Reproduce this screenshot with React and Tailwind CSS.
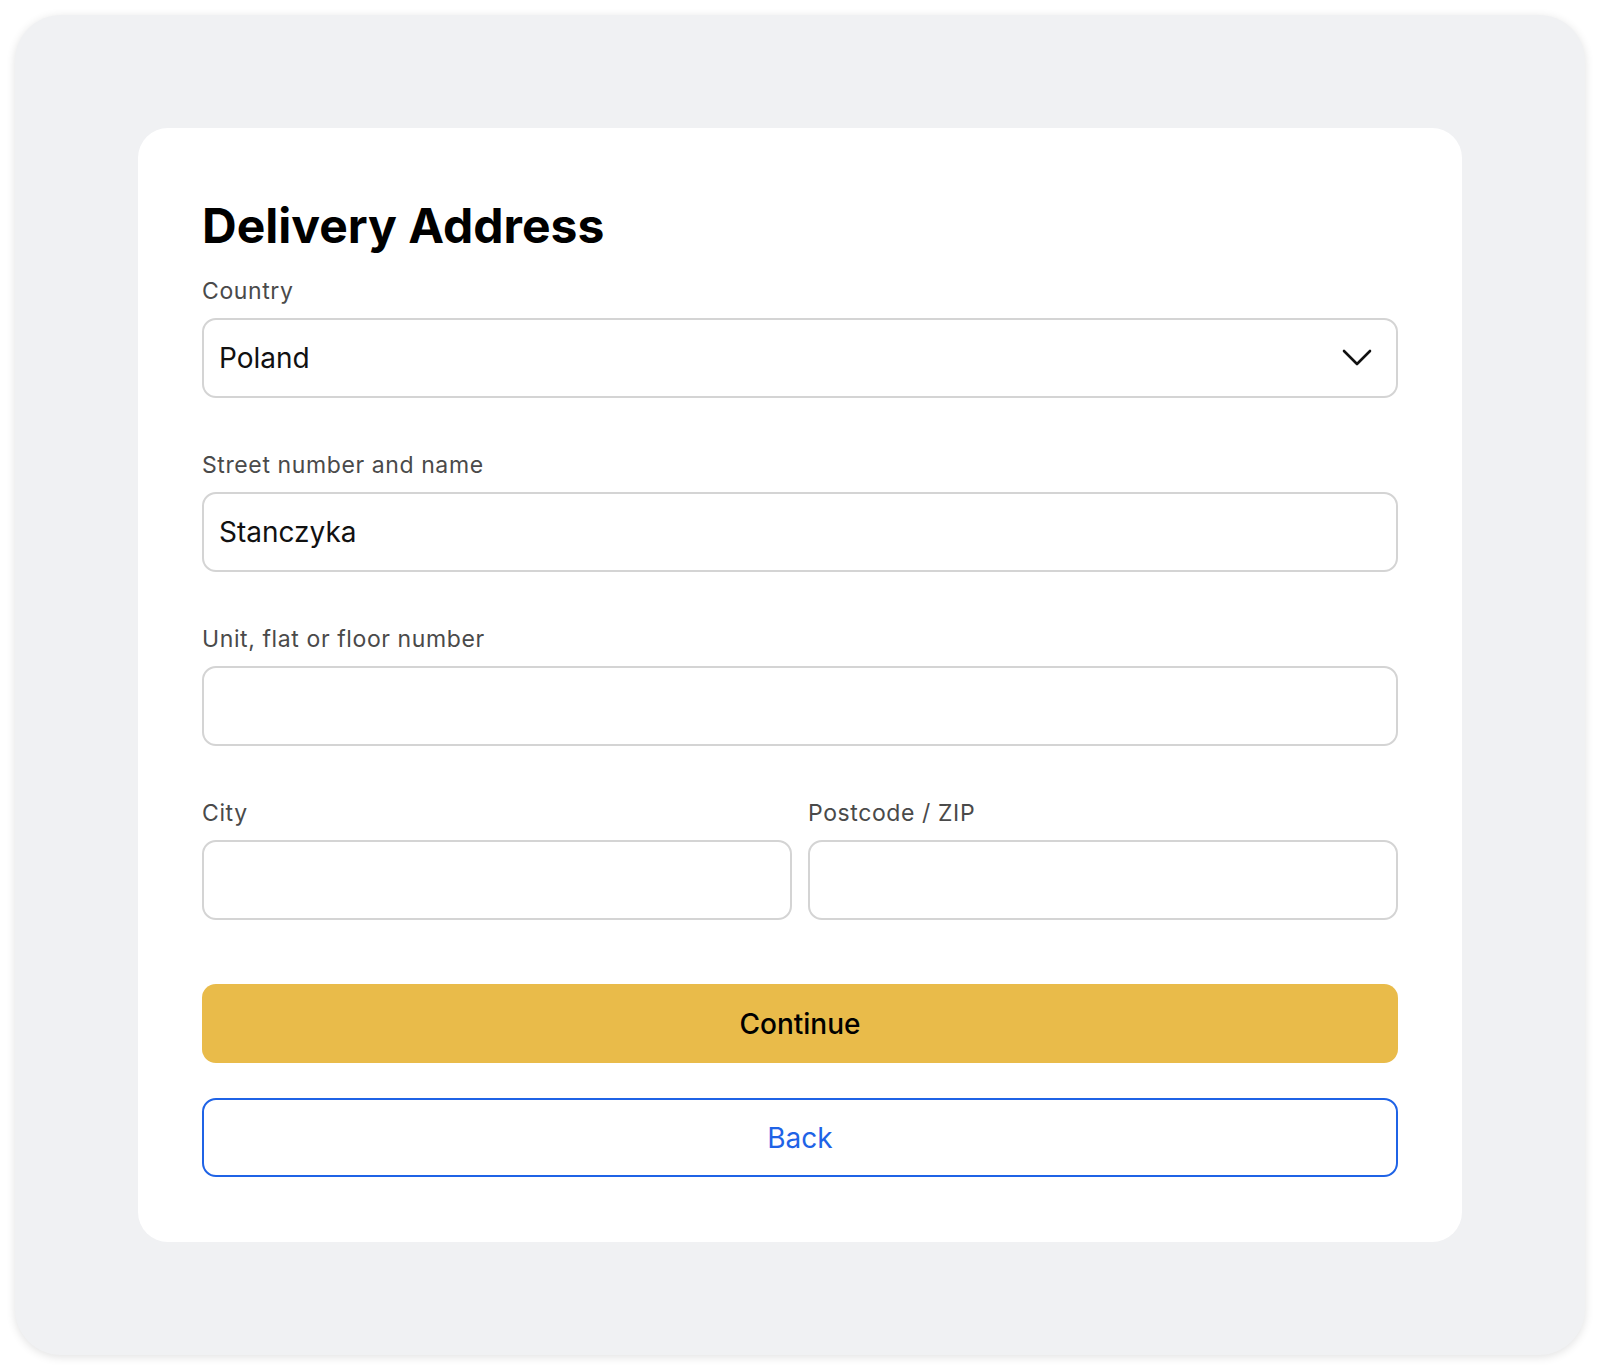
import React from 'react';

const Field = ({ label, value, select }) => (
  <div className="flex flex-col">
    <label className="text-[23px] leading-[30px] tracking-[0.6px] text-[#4a4a4a]">{label}</label>
    <div className="mt-[12px] h-[80px] rounded-[14px] border-2 border-[#d4d4d4] bg-white flex items-center justify-between pl-[15px] pr-[24px]">
      <span className="text-[28px] text-[#111]">{value}</span>
      {select && (
        <svg width="30" height="18" viewBox="0 0 30 18" fill="none">
          <path d="M2 2l13 13L28 2" stroke="#111" strokeWidth="2.6" strokeLinecap="round" strokeLinejoin="round" />
        </svg>
      )}
    </div>
  </div>
);

const App = () => {
  return (
    <div className="w-[1600px] h-[1370px] bg-white p-[15px] font-['Inter',sans-serif]">
      <div className="w-full h-full rounded-[46px] bg-[#f0f1f3] shadow-[0_2px_10px_rgba(0,0,0,0.12)] flex items-center justify-center">
        {/* Form card */}
        <div className="w-[1324px] bg-white rounded-[30px] px-[64px] pt-[67px] pb-[65px]">
          <h1 className="text-[48px] leading-[62px] font-bold text-black">Delivery Address</h1>

          <div className="mt-[19px] flex flex-col gap-[52px]">
            <Field label="Country" value="Poland" select />
            <Field label="Street number and name" value="Stanczyka" />
            <Field label="Unit, flat or floor number" value="" />
            <div className="grid grid-cols-2 gap-[16px]">
              <Field label="City" value="" />
              <Field label="Postcode / ZIP" value="" />
            </div>
          </div>

          <button className="mt-[64px] w-full h-[79px] rounded-[14px] bg-[#e9bb4a] text-[28px] font-medium text-black">
            Continue
          </button>
          <button className="mt-[35px] w-full h-[79px] rounded-[14px] border-2 border-[#1f63e6] bg-white text-[28px] text-[#1f63e6]">
            Back
          </button>
        </div>
      </div>
    </div>
  );
};

export default App;
